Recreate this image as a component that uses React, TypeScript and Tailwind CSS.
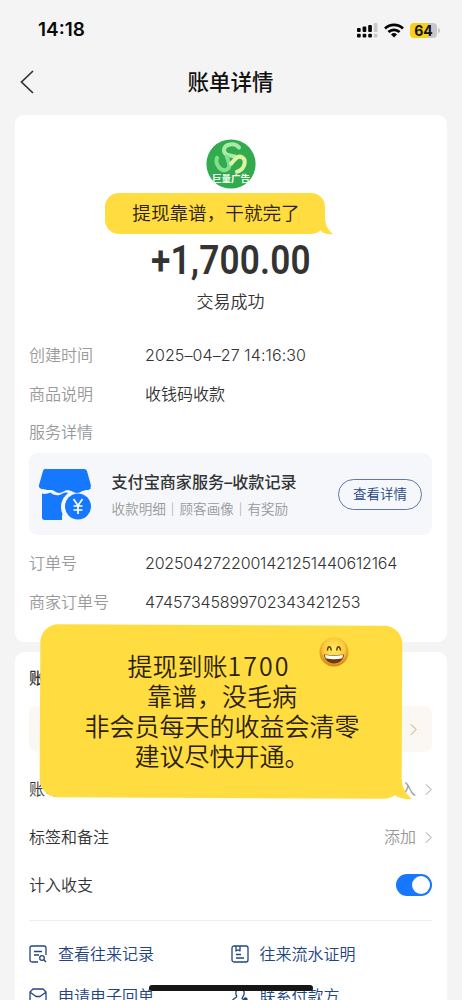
import type { ReactNode } from 'react';

const CJK = "font-['Inter','Noto_Sans_CJK_SC',sans-serif]";

function Chevron({ className }: { className: string }) {
  return (
    <svg viewBox="0 0 8 14" className={`h-[13px] w-[7px] ${className}`} fill="none" stroke="currentColor" strokeWidth="1.1">
      <path d="M1 1l6 6-6 6" />
    </svg>
  );
}

function Signal() {
  const bars = [
    { x: 0, y: 5, h: 4, c: '#050505' },
    { x: 5.6, y: 3.5, h: 5.5, c: '#050505' },
    { x: 11.2, y: 2, h: 7, c: '#050505' },
    { x: 16.8, y: 0, h: 9, c: '#c9c9c9' },
  ];
  return (
    <svg viewBox="0 0 21 15" className="h-[15px] w-[21px]">
      {bars.map((b) => (
        <g key={b.x} fill={b.c}>
          <rect x={b.x} y={b.y} width="3.7" height={b.h} rx="1" />
          <rect x={b.x} y="10.8" width="3.7" height="3.8" rx="1" />
        </g>
      ))}
    </svg>
  );
}

function Wifi() {
  return (
    <svg viewBox="0 0 20 15" className="ml-[6px] h-[15px] w-5" fill="none" stroke="#050505" strokeWidth="2.7">
      <path d="M1 5.5a13 13 0 0 1 18 0" />
      <path d="M4.4 9a8.2 8.2 0 0 1 11.2 0" />
      <path d="M10 14.5l-3-3.1a4.4 4.4 0 0 1 6 0z" fill="#050505" stroke="none" />
    </svg>
  );
}

function Avatar() {
  const arm = 'M33 8.500C29 3.500 18.500 4.500 18 11c-.2 5 5 5.500 11 6.500';
  return (
    <svg viewBox="0 0 50 50" className="h-[50px] w-[50px]">
      <circle cx="25" cy="25" r="24.6" fill="#32ab4f" />
      <g fill="none" strokeWidth="4" strokeLinecap="round">
        <path d={arm} stroke="#a9eaa8" />
        <path d={arm} stroke="#7fe08f" transform="rotate(240 25 20)" />
        <path d={arm} stroke="#dff3a0" transform="rotate(120 25 20)" />
      </g>
      <text x="25" y="43" textAnchor="middle" fontSize="9.500" fontWeight="700" fill="#f4fff4" className={CJK}>
        巨量广告
      </text>
    </svg>
  );
}

function ShopIcon() {
  return (
    <svg viewBox="0 0 54 54" className="h-[54px] w-[54px]">
      <path
        d="M7 2h39c1.500 0 2.500.8 3 2l4 14.500c0 3-2 4.500-5 4.500-4 0-5 3-9 3s-5-3-9-3-5 3-9 3c-3 0-5-3-7.500-3S8 23 5 22C2 22 .5 20 1 18L5 4c.4-1.300 1-2 2-2z"
        fill="#1677ff"
      />
      <path d="M4 26.500c3 1 6 0 8.500-1 3 3 8 4 12 1 3-2 6-1 8 .5L24 49v4H6.500C5 53 4 52 4 50.500z" fill="#1677ff" />
      <circle cx="40" cy="40" r="17" fill="#f5f7fb" />
      <path d="M25 21h28c-1 1.500-2.500 2-5 2-4 0-5 3-9 3s-5-3-9-3z" fill="#1677ff" />
      <circle cx="40" cy="39.500" r="13" fill="#1677ff" />
      <path d="M35.500 32l4.500 6.500 4.500-6.500M40 38.500V47M35.500 39h9M35.500 43h9" stroke="#fff" strokeWidth="1.700" fill="none" />
    </svg>
  );
}

function Emoji() {
  return (
    <svg viewBox="0 0 30 30" className="absolute left-[319px] top-[637px] h-[30px] w-[30px]">
      <defs>
        <radialGradient id="face" cx="0.5" cy="0.4" r="0.62">
          <stop offset="0" stopColor="#ffed68" />
          <stop offset="0.6" stopColor="#fdc93a" />
          <stop offset="1" stopColor="#cf7413" />
        </radialGradient>
      </defs>
      <circle cx="15" cy="15" r="14.500" fill="url(#face)" />
      <path d="M8.500 13c.3-4.500 3-4.500 3.700 0M17.800 13c.3-4.500 3-4.500 3.700 0" fill="none" stroke="#65410b" strokeWidth="1.500" strokeLinecap="round" />
      <path d="M5 17.500c7 1 13 1 20 0-.4 5.500-4.500 9-10 9s-9.600-3.500-10-9z" fill="#6b3d0c" />
      <path d="M6 18c6 1 12 1 18 0-.2 2-.6 3.200-1.500 3.600-5 1-10 1-15 0C6.600 21.200 6.200 20 6 18z" fill="#fff" />
    </svg>
  );
}

function Row({ label, children }: { label: string; children?: ReactNode }) {
  return (
    <div className="flex h-[38.400px] items-center text-[16px]">
      <span className="w-[116px] shrink-0 text-[#999]">{label}</span>
      <span className="whitespace-nowrap text-[#333]">{children}</span>
    </div>
  );
}

function LinkItem({ label, children }: { label: string; children: ReactNode }) {
  return (
    <div className="flex h-[42px] items-center gap-[11px] text-[#22457f]">
      <svg viewBox="0 0 18 18" className="h-[18px] w-[18px]" fill="none" stroke="currentColor" strokeWidth="1.300" strokeLinejoin="round">
        {children}
      </svg>
      <span className="whitespace-nowrap text-[16px]">{label}</span>
    </div>
  );
}

export default function App() {
  return (
    <div className={`relative h-[1000px] w-[462px] overflow-hidden bg-[#f4f4f4] font-[350] text-[#333] ${CJK}`}>
      <div className="flex h-[60px] items-center justify-between pl-[38px] pr-[22px]">
        <span className="text-[19px] font-semibold text-[#0a0a0a]">14:18</span>
        <div className="flex items-center">
          <Signal />
          <Wifi />
          <div className="ml-[6px] flex h-[15px] w-[27px] items-center justify-center rounded-[4px] bg-linear-to-r from-[#f7d117] from-66% to-[#c8c8c8] to-66% text-[14px] font-bold leading-[15px] text-[#111]">
            <span className="pt-px">64</span>
          </div>
          <div className="ml-px h-[5px] w-[2px] rounded-r bg-[#c8c8c8]" />
        </div>
      </div>
      <div className="flex h-[55px] items-center px-[20px] pb-[11px]">
        <svg viewBox="0 0 14 24" className="h-[24px] w-[14px]" fill="none" stroke="#333" strokeWidth="1.700">
          <path d="M13 1L1.500 12 13 23" />
        </svg>
        <h1 className="flex-1 pr-[15px] pt-px text-center text-[21.500px] font-medium text-[#111]">账单详情</h1>
      </div>

      <section className="mx-[15px] flex h-[527px] flex-col rounded-[9px] bg-white pl-[14px] pr-[15px] pt-[24px]">
        <div className="flex flex-col items-center">
          <Avatar />
          <div className="mt-[50px] scale-x-[0.88] font-['Roboto',sans-serif] text-[40px] font-semibold leading-[44px] tracking-[0.200px] text-[#333]">
            +1,700.00
          </div>
          <div className="mt-[7px] text-[17px] leading-[24px]">交易成功</div>
        </div>
        <div className="mt-[22px]">
          <Row label="创建时间"><span className="tracking-[0.100px]">2025–04–27 14:16:30</span></Row>
          <Row label="商品说明">收钱码收款</Row>
          <Row label="服务详情" />
        </div>
        <div className="mt-[2px] flex h-[82px] items-center rounded-[9px] bg-[#f5f7fb] pl-[9px] pr-[10px]">
          <ShopIcon />
          <div className="ml-[19.500px] flex-1 whitespace-nowrap">
            <div className="text-[16.100px] font-medium leading-[24px]">支付宝商家服务–收款记录</div>
            <div className="mt-[5px] text-[13.600px] leading-[20px] text-[#999]">收款明细｜顾客画像｜有奖励</div>
          </div>
          <div className="flex h-[31px] w-[84px] items-center justify-center rounded-full border border-[#5d7aab] text-[13.500px] text-[#22457f]">
            查看详情
          </div>
        </div>
        <div className="mt-[9px]">
          <Row label="订单号"><span className="tracking-[-0.170px]">2025042722001421251440612164</span></Row>
          <Row label="商家订单号"><span className="tracking-[-0.090px]">47457345899702343421253</span></Row>
        </div>
      </section>

      <section className="mx-[15px] mt-[10px] flex h-[400px] flex-col rounded-[9px] bg-white pl-[14px] pr-[15px] pt-[14px]">
        <h2 className="text-[16px] font-medium leading-[24px]">账单管理</h2>
        <div className="mt-[16px] flex h-[46px] items-center justify-end rounded-[8px] bg-[#fbf8f3] pr-[15px]">
          <Chevron className="text-[#b8a170]" />
        </div>
        <div className="mt-[13px] flex h-[48px] items-center text-[16px]">
          <span className="flex-1 tracking-[1px]">账单分类</span>
          <span className="mr-[9px] text-[#999]">转账收入</span>
          <Chevron className="text-[#999]" />
        </div>
        <div className="flex h-[48px] items-center text-[16px]">
          <span className="flex-1">标签和备注</span>
          <span className="mr-[9px] text-[#999]">添加</span>
          <Chevron className="text-[#999]" />
        </div>
        <div className="flex h-[48px] items-center justify-between text-[16px]">
          <span>计入收支</span>
          <div className="flex h-[22px] w-[36px] items-center justify-end rounded-full bg-[#1677ff] p-[2px]">
            <div className="h-[18px] w-[18px] rounded-full bg-white" />
          </div>
        </div>
        <div className="mt-[11px] border-t border-[#eee]" />
        <div className="mt-[12px] grid grid-cols-2">
          <LinkItem label="查看往来记录">
            <path d="M9 17H3a2 2 0 0 1-2-2V3a2 2 0 0 1 2-2h12a2 2 0 0 1 2 2v7M5 6.500h8M5 10h5" />
            <circle cx="13" cy="13" r="2.300" />
            <path d="M14.800 14.800L17 17" />
          </LinkItem>
          <LinkItem label="往来流水证明">
            <rect x="1" y="1" width="16" height="16" rx="2" />
            <path d="M5 1v5l2-1.200L9 6V1M5 9.500h5M5 13h8" />
          </LinkItem>
          <LinkItem label="申请电子回单">
            <path d="M4 2h10l3 3v9a2 2 0 0 1-2 2H3a2 2 0 0 1-2-2V5zM1.500 5.500L7 9.500h4l5.500-4" />
          </LinkItem>
          <LinkItem label="联系付款方">
            <path d="M6 9.500C4 7 4.500 1.500 9 1.500S14 7 12 9.500M6 9.500L1.500 13M12 9.500l-1 2 4.500 3" />
            <circle cx="14.500" cy="12.500" r="1.500" fill="currentColor" />
          </LinkItem>
        </div>
      </section>

      <div className="absolute left-[105px] top-[193px] flex h-[41px] w-[220px] items-center justify-center rounded-[14px] bg-[#ffdc40] pl-[2px] text-[18.600px] text-[#2b210b]">
        提现靠谱，干就完了
      </div>
      <svg viewBox="0 0 16 18" className="absolute left-[317px] top-[217px] h-[18px] w-[16px]" fill="#ffdc40">
        <path d="M0 0h8c0 8 3 13 8 17-5 .6-9-.3-12-3z" />
      </svg>

      <div className="absolute left-[40px] top-[625px] h-[173px] w-[362px] rotate-[0.300deg] rounded-[18px] bg-[#ffdc40]" />
      <svg viewBox="0 0 24 20" className="absolute left-[389px] top-[780px] h-[20px] w-[24px]" fill="#ffdc40">
        <path d="M0 8L13 0c0 8 4 14 10 19-6 .5-12-.5-16-3z" />
      </svg>
      <div className="absolute left-[40px] top-[650px] w-[364px] text-center text-[25px] leading-[30px] text-[#2b210b]">
        <div className="-translate-x-[13px]">提现到账<span className="font-['Noto_Sans_CJK_SC',sans-serif] tracking-[2px]">1700</span></div>
        <div>靠谱，没毛病</div>
        <div>非会员每天的收益会清零</div>
        <div>建议尽快开通。</div>
      </div>
      <Emoji />

      <div className="absolute left-[149px] top-[985px] h-[5.500px] w-[164px] rounded-full bg-[#161616]" />
    </div>
  );
}
